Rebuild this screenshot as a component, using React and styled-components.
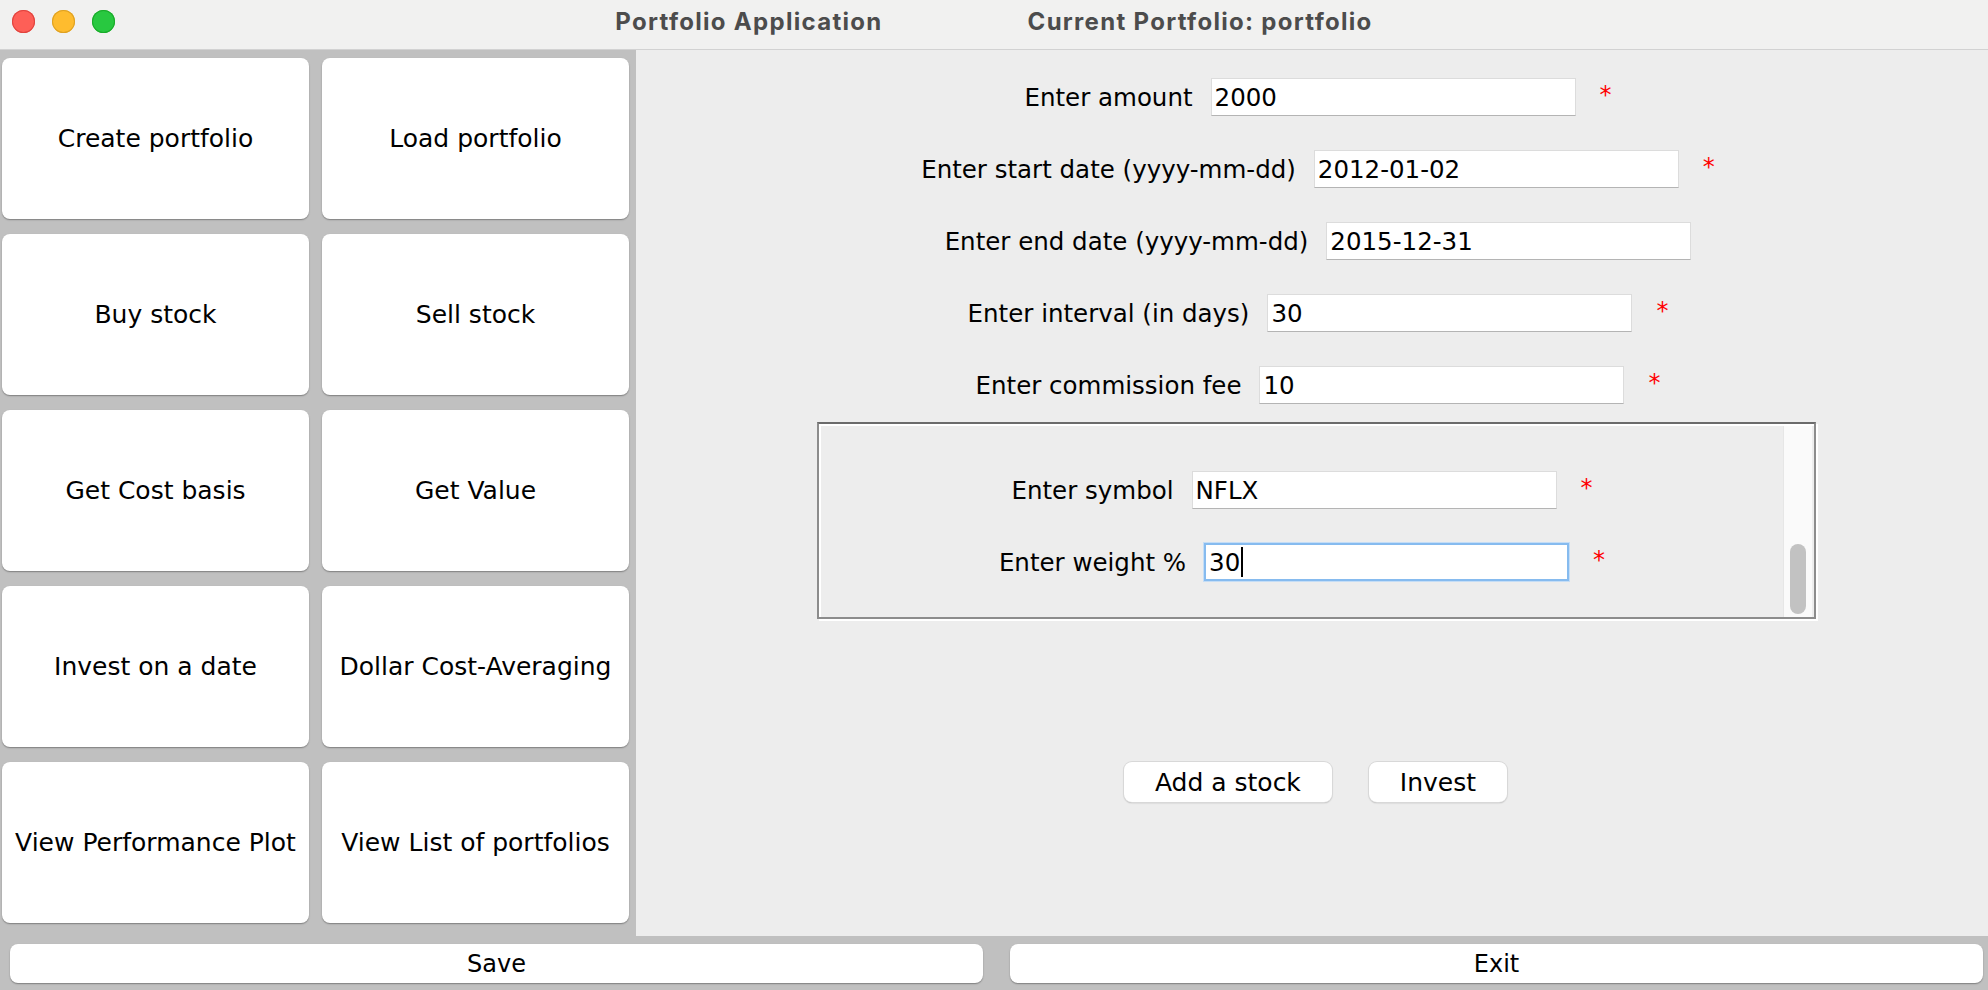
import styled, { createGlobalStyle } from "styled-components";

const GlobalStyle = createGlobalStyle`
  html, body {
    margin: 0;
    padding: 0;
    background: #c0c0c0;
  }
  body {
    font-family: "DejaVu Sans", "Liberation Sans", sans-serif;
    color: #000;
  }
  * { box-sizing: border-box; }
`;

const menuItems = [
  "Create portfolio",
  "Load portfolio",
  "Buy stock",
  "Sell stock",
  "Get Cost basis",
  "Get Value",
  "Invest on a date",
  "Dollar Cost-Averaging",
  "View Performance Plot",
  "View List of portfolios",
];

const fields = [
  { label: "Enter amount", value: "2000", required: true },
  { label: "Enter start date (yyyy-mm-dd)", value: "2012-01-02", required: true },
  { label: "Enter end date (yyyy-mm-dd)", value: "2015-12-31", required: false },
  { label: "Enter interval (in days)", value: "30", required: true },
  { label: "Enter commission fee", value: "10", required: true },
];

const App = () => {
  return (
    <Window>
      <GlobalStyle />
      <TitleBar>
        <Lights>
          <Light color="#fe5f57" edge="#e0443e" />
          <Light color="#febc2e" edge="#dea123" />
          <Light color="#28c840" edge="#1aab29" />
        </Lights>
        <Title>
          <span>Portfolio Application</span>
          <span>Current Portfolio: portfolio</span>
        </Title>
        <div />
      </TitleBar>

      <Body>
        <Menu>
          {menuItems.map((item) => (
            <MenuButton key={item}>{item}</MenuButton>
          ))}
        </Menu>

        <Content>
          <Form>
            {fields.map((f) => (
              <Row key={f.label}>
                <Label>{f.label}</Label>
                <Field>{f.value}</Field>
                <Star hidden={!f.required}>*</Star>
              </Row>
            ))}
          </Form>

          <StockBox>
            <StockRows>
              <Row>
                <Label>Enter symbol</Label>
                <Field>NFLX</Field>
                <Star>*</Star>
              </Row>
              <Row>
                <Label>Enter weight %</Label>
                <Field focused>
                  30<Caret />
                </Field>
                <Star>*</Star>
              </Row>
            </StockRows>
            <ScrollTrack>
              <ScrollThumb />
            </ScrollTrack>
          </StockBox>

          <Actions>
            <SmallButton>Add a stock</SmallButton>
            <SmallButton>Invest</SmallButton>
          </Actions>
        </Content>
      </Body>

      <BottomBar>
        <WideButton>Save</WideButton>
        <WideButton>Exit</WideButton>
      </BottomBar>
    </Window>
  );
};

const Window = styled.div`
  width: 1988px;
  height: 990px;
  display: flex;
  flex-direction: column;
  background: #c0c0c0;
  overflow: hidden;
`;

const TitleBar = styled.div`
  height: 50px;
  flex-shrink: 0;
  display: grid;
  grid-template-columns: 1fr auto 1fr;
  align-items: center;
  background: #f1f1f0;
  border-bottom: 1px solid #d2d2d2;
`;

const Lights = styled.div`
  display: flex;
  gap: 17px;
  padding-left: 12px;
  padding-bottom: 6px;
`;

const Light = styled.span`
  width: 23px;
  height: 23px;
  border-radius: 50%;
  background: ${(p) => p.color};
  box-shadow: inset 0 0 0 1px ${(p) => p.edge};
`;

const Title = styled.div`
  display: flex;
  gap: 145px;
  font-family: Inter, "Liberation Sans", sans-serif;
  font-weight: 700;
  font-size: 24px;
  letter-spacing: 1.3px;
  color: #4c4c4c;
  padding-bottom: 7px;
`;

const Body = styled.div`
  flex: 1;
  display: flex;
  min-height: 0;
`;

const Menu = styled.div`
  width: 636px;
  flex-shrink: 0;
  display: grid;
  grid-template-columns: 307px 307px;
  grid-auto-rows: 161px;
  column-gap: 13px;
  row-gap: 15px;
  padding: 8px 0 0 2px;
  background: #c0c0c0;
`;

const MenuButton = styled.button`
  border: none;
  border-radius: 8px;
  background: #fff;
  box-shadow: 0 1px 1.5px rgba(0, 0, 0, 0.35);
  font-family: "DejaVu Sans", sans-serif;
  font-size: 25px;
  color: #000;
  padding: 0;
  white-space: nowrap;
`;

const Content = styled.div`
  flex: 1;
  display: flex;
  flex-direction: column;
  background: #ededed;
`;

const Form = styled.div`
  display: flex;
  flex-direction: column;
  gap: 34px;
  padding: 28px 0 0 12px;
`;

const Row = styled.div`
  display: flex;
  justify-content: center;
  align-items: center;
  height: 38px;
`;

const Label = styled.span`
  font-size: 24.5px;
  margin-right: 18px;
  white-space: nowrap;
`;

const Field = styled.div`
  width: 365px;
  height: 38px;
  display: flex;
  align-items: center;
  padding: 0 3px;
  background: #fff;
  font-size: 24.5px;
  border: ${(p) => (p.focused ? "2px solid #86bbef" : "1px solid #dcdcdc")};
  border-bottom-color: ${(p) => (p.focused ? "#86bbef" : "#b4b4b4")};
  box-shadow: ${(p) => (p.focused ? "0 0 0 1px #c4ddf6" : "none")};
`;

const Caret = styled.span`
  width: 2px;
  height: 30px;
  margin-left: 1px;
  background: #000;
`;

const Star = styled.span`
  width: ${(p) => (p.hidden ? "13px" : "auto")};
  margin-left: ${(p) => (p.hidden ? "0" : "24px")};
  visibility: ${(p) => (p.hidden ? "hidden" : "visible")};
  color: #ff0000;
  font-size: 24px;
  align-self: flex-start;
  margin-top: 3px;
`;

const StockBox = styled.div`
  display: flex;
  width: 999px;
  height: 197px;
  margin: 18px 0 0 181px;
  border: 2px solid #8c8c8c;
  border-top-color: #6b6b6b;
  box-shadow: inset 2px 2px 0 #fff, 2px 2px 0 #fff;
  padding: 2px 2px 0 2px;
`;

const StockRows = styled.div`
  flex: 1;
  display: flex;
  flex-direction: column;
  gap: 34px;
  padding-top: 45px;
`;

const ScrollTrack = styled.div`
  width: 29px;
  display: flex;
  flex-direction: column;
  justify-content: flex-end;
  align-items: center;
  background: #fafafa;
  border-left: 1px solid #e6e6e6;
  padding-bottom: 3px;
`;

const ScrollThumb = styled.div`
  width: 16px;
  height: 70px;
  border-radius: 8px;
  background: #c2c2c2;
`;

const Actions = styled.div`
  display: flex;
  justify-content: center;
  gap: 37px;
  margin-top: 143px;
  padding-left: 7px;
`;

const SmallButton = styled.button`
  height: 40px;
  padding: 0 31px;
  border: none;
  border-radius: 8px;
  background: #fff;
  box-shadow: 0 0 0 1px #d8d8d8, 0 1px 1.5px rgba(0, 0, 0, 0.3);
  font-family: "DejaVu Sans", sans-serif;
  font-size: 25px;
  color: #000;
`;

const BottomBar = styled.div`
  height: 54px;
  flex-shrink: 0;
  display: grid;
  grid-template-columns: 973px 973px;
  column-gap: 27px;
  padding: 8px 0 0 10px;
  background: #c0c0c0;
`;

const WideButton = styled.button`
  height: 39px;
  border: none;
  border-radius: 8px;
  background: #fff;
  box-shadow: 0 1px 1.5px rgba(0, 0, 0, 0.35);
  font-family: "DejaVu Sans", sans-serif;
  font-size: 24px;
  color: #000;
  padding: 0;
`;

export default App;
